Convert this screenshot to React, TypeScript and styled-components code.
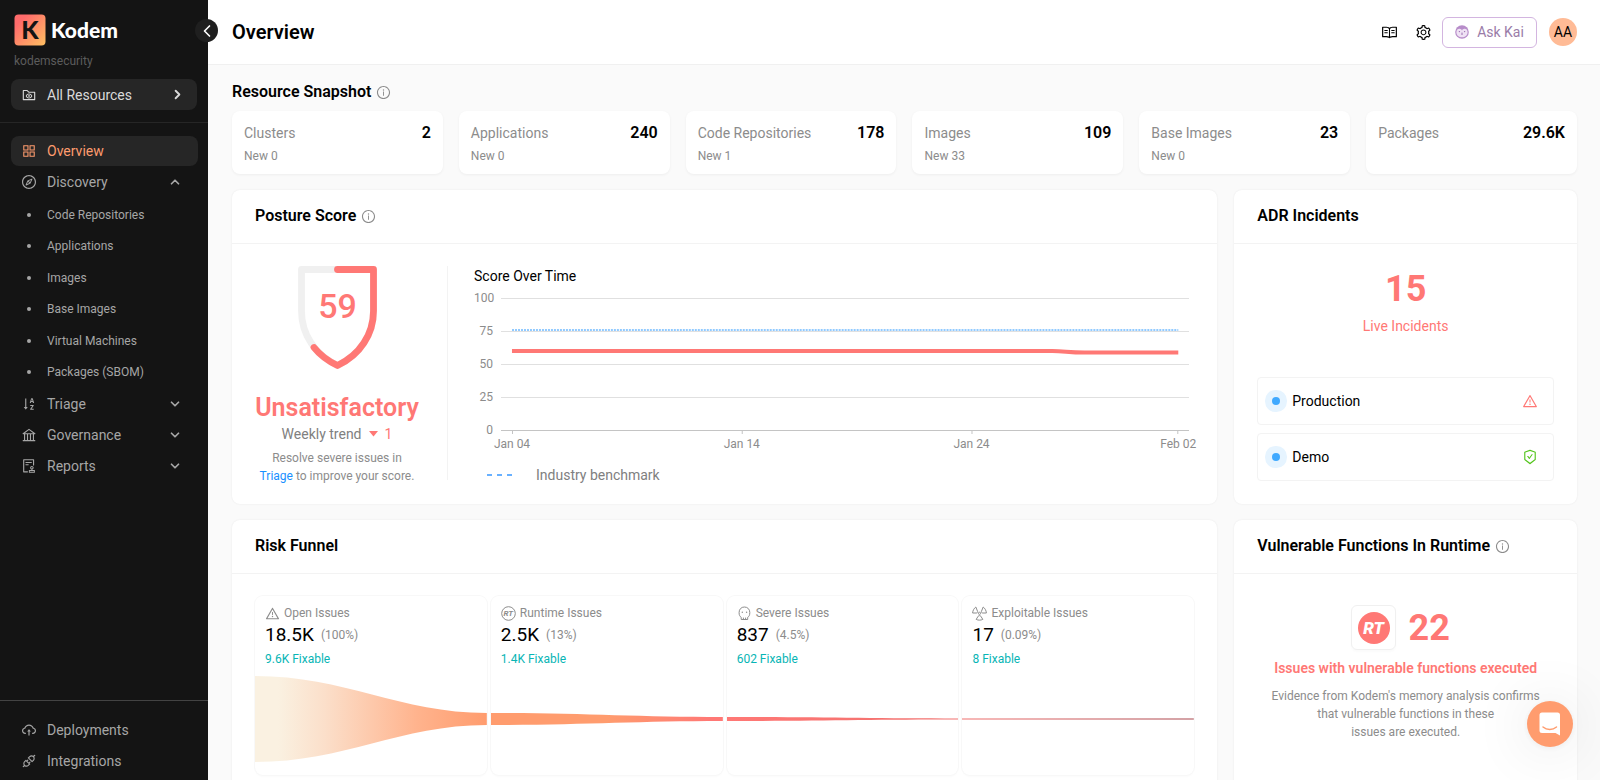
import React from 'react';
import styled, { createGlobalStyle } from 'styled-components';
import {
  AiOutlineApi,
  AiOutlineAppstore,
  AiOutlineAudit,
  AiOutlineBank,
  AiOutlineCloudUpload,
  AiOutlineCompass,
  AiOutlineFolderView,
  AiOutlineInfoCircle,
  AiOutlineRead,
  AiOutlineSafetyCertificate,
  AiOutlineSetting,
  AiOutlineSortAscending,
  AiOutlineWarning,
} from 'react-icons/ai';
import { ChevronDown, ChevronLeft, ChevronRight, ChevronUp } from 'lucide-react';

const coral = '#ff7875';
const orange = '#ff9c6e';
const muted = '#8c8c8c';
const line = '#f3f3f3';

const GlobalStyle = createGlobalStyle`
  *, *::before, *::after { box-sizing: border-box; }
  body {
    margin: 0;
    font-family: Roboto, "Liberation Sans", sans-serif;
    font-size: 14px;
    color: #000;
    background: #fafafa;
  }
  button { font: inherit; color: inherit; border: 0; background: none; padding: 0; cursor: pointer; }
  a { color: inherit; text-decoration: none; }
  h1, h2, h3, p, ul { margin: 0; padding: 0; }
  ul { list-style: none; }
  svg { display: block; flex: none; }
`;

const Page = styled.div`
  display: flex;
  height: 100vh;
`;

/* Sidebar */
const Sidebar = styled.aside`
  position: relative;
  z-index: 1;
  flex: none;
  width: 208px;
  display: flex;
  flex-direction: column;
  background: #141414;
  color: #a6a6a6;
`;

const Brand = styled.a`
  display: flex;
  align-items: center;
  gap: 5px;
  padding: 14px 14px 0;
`;

const BrandName = styled.span`
  font: 900 21px/32px Lato, sans-serif;
  color: #fff;
`;

const Tenant = styled.p`
  padding: 6px 14px 0;
  font-size: 12px;
  line-height: 18px;
  color: #5c5c5c;
`;

const CollapseButton = styled.button`
  position: absolute;
  top: 19px;
  right: -10px;
  width: 23px;
  height: 23px;
  display: grid;
  place-items: center;
  border-radius: 50%;
  background: #1f1f1f;
  color: #fff;
`;

const Scope = styled.div`
  padding: 9px 11px 12px;
  border-bottom: 1px solid #262626;
`;

const ScopeButton = styled.button`
  display: flex;
  align-items: center;
  gap: 10px;
  width: 100%;
  height: 31px;
  padding: 0 12px 0 10px;
  border-radius: 8px;
  background: #262626;
  color: #d9d9d9;
`;

const Grow = styled.span`
  flex: 1;
  text-align: left;
`;

const Nav = styled.nav`
  flex: 1;
  display: flex;
  flex-direction: column;
  padding: 13px 10px 0 11px;
`;

const NavLink = styled.a<{ $active?: boolean }>`
  display: flex;
  align-items: center;
  gap: 10px;
  height: 30px;
  padding: 0 10px;
  border-radius: 8px;
  background: ${(p) => (p.$active ? '#262626' : 'transparent')};
  color: ${(p) => (p.$active ? orange : 'inherit')};
`;

const NavGroup = styled(NavLink).attrs({ as: 'button' })`
  width: 100%;
  height: 31px;
  padding-right: 16px;
`;

const SubNav = styled.ul`
  display: grid;
  grid-auto-rows: 1fr;
  height: 189px;
  margin-top: 2px;
`;

const SubLink = styled.a`
  display: flex;
  align-items: center;
  gap: 16px;
  height: 100%;
  padding-left: 16px;
  font-size: 12px;

  &::before {
    content: '';
    width: 4px;
    height: 4px;
    border-radius: 50%;
    background: #a6a6a6;
  }
`;

const SideFooter = styled.div`
  padding: 13px 10px 4px 11px;
  border-top: 1px solid #434343;
  ${NavLink} { height: 31px; }
`;

/* Main column */
const Main = styled.main`
  flex: 1;
  min-width: 0;
  display: flex;
  flex-direction: column;
`;

const TopBar = styled.header`
  flex: none;
  display: flex;
  align-items: center;
  justify-content: space-between;
  height: 65px;
  padding: 0 23px 0 24px;
  background: #fff;
  border-bottom: 1px solid #f0f0f0;
`;

const PageTitle = styled.h1`
  font-size: 20px;
  line-height: 28px;
  font-weight: 600;
`;

const Tools = styled.div`
  display: flex;
  align-items: center;
`;

const IconButton = styled.button`
  width: 34px;
  height: 30px;
  display: grid;
  place-items: center;
`;

const AskButton = styled.button`
  display: flex;
  align-items: center;
  justify-content: center;
  gap: 8px;
  width: 95px;
  height: 31px;
  margin: 0 12px 0 2px;
  border: 1px solid #d3b5e0;
  border-radius: 6px;
  color: #9a7ca8;
`;

const Avatar = styled.button`
  width: 28px;
  height: 28px;
  border-radius: 50%;
  background: #ffbb96;
  font-size: 14px;
`;

const Content = styled.div`
  flex: 1;
  min-height: 0;
  overflow-y: auto;
  scrollbar-width: none;
  padding: 15px 23px 24px 24px;
`;

const Heading = styled.h2`
  display: flex;
  align-items: center;
  gap: 5px;
  font-size: 16px;
  line-height: 24px;
  font-weight: 600;
  svg { color: ${muted}; }
`;

const Snapshot = styled.section`
  display: grid;
  grid-template-columns: repeat(6, minmax(0, 1fr));
  gap: 16px;
  margin: 7px 0 16px;
`;

const Stat = styled.article`
  display: grid;
  gap: 3px;
  align-content: start;
  height: 63px;
  padding: 11px 12px 9px;
  border-radius: 8px;
  background: #fff;
  box-shadow: 0 1px 3px rgba(0, 0, 0, 0.05);
  color: ${muted};
`;

const StatTop = styled.div`
  display: flex;
  justify-content: space-between;
  line-height: 22px;
`;

const StatValue = styled.strong`
  font-size: 16px;
  font-weight: 600;
  color: #000;
`;

const Small = styled.span`
  font-size: 12px;
  line-height: 18px;
  color: ${muted};
`;

const Panels = styled.div`
  display: grid;
  grid-template-columns: minmax(0, 23fr) minmax(0, 8fr);
  gap: 16px 17px;
`;

const PanelBox = styled.section`
  display: flex;
  flex-direction: column;
  border-radius: 8px;
  background: #fff;
  box-shadow: 0 0 2px rgba(0, 0, 0, 0.08);
`;

const PanelHead = styled.header`
  padding: 14px 23px 15px;
  border-bottom: 1px solid ${line};
`;

/* Posture score */
const PostureBody = styled.div`
  display: flex;
  padding: 22px 28px 18px 23px;
`;

const ScoreColumn = styled.div`
  display: flex;
  flex-direction: column;
  align-items: center;
  width: 164px;
  text-align: center;
`;

const ScoreLabel = styled.strong`
  margin-top: 23px;
  font-size: 25px;
  line-height: 32px;
  font-weight: 600;
  color: ${coral};
`;

const Trend = styled.p`
  display: flex;
  align-items: center;
  gap: 7px;
  margin-bottom: 5px;
  line-height: 20px;
  color: #808080;
`;

const TrendValue = styled.span`
  color: ${coral};
`;

const Hint = styled.p`
  font-size: 12px;
  line-height: 18px;
  color: ${muted};
  a { color: #1890ff; }
`;

const Separator = styled.div`
  width: 1px;
  margin: 0 26px 5px 28px;
  background: ${line};
`;

const ChartColumn = styled.div`
  flex: 1;
  min-width: 0;
  line-height: 20px;
`;

const ChartRow = styled.div`
  display: flex;
  align-items: flex-start;
  gap: 8px;
  margin-top: 4px;
  font-size: 12px;
  line-height: 16px;
  color: ${muted};
`;

const YAxis = styled.div`
  display: flex;
  flex-direction: column;
  justify-content: space-between;
  width: 19px;
  height: 148px;
  text-align: right;
`;

const Plot = styled.div`
  flex: 1;
  min-width: 0;
  svg { width: 100%; height: 146px; }
`;

const XAxis = styled.div`
  display: grid;
  grid-template-columns: 10fr 10fr 9fr 0;
  padding: 0 11px;
  white-space: nowrap;
`;

const XLabel = styled.span`
  display: flex;
  justify-content: center;
  width: 0;
`;

const Legend = styled.div`
  display: flex;
  align-items: center;
  gap: 24px;
  margin-top: 13px;
  padding-left: 13px;
  color: #808080;
`;

/* Risk funnel */
const FunnelBody = styled.div`
  display: grid;
  grid-template-columns: repeat(4, minmax(0, 1fr));
  gap: 4px;
  padding: 22px 23px;
`;

const Stage = styled.article`
  border-radius: 8px;
  padding: 8px 0 13px;
  box-shadow: 0 0 0 1px #f8f8f8, 0 2px 2px rgba(0, 0, 0, 0.02);
`;

const StageInfo = styled.div`
  padding: 0 10px;
`;

const StageLabel = styled.h3`
  display: flex;
  align-items: center;
  gap: 4px;
  font-size: 12px;
  line-height: 18px;
  font-weight: 400;
  color: ${muted};
`;

const StageValue = styled.p`
  display: flex;
  align-items: center;
  gap: 7px;
  padding-top: 1px;
  font-size: 19px;
  line-height: 24px;
`;

const Fixable = styled.a`
  display: block;
  padding: 3px 0 8px;
  font-size: 12px;
  line-height: 18px;
  && { color: #08b5b5; }
`;

const Wave = styled.svg`
  width: 100%;
  height: 86px;
`;

/* Right column */
const IncidentBody = styled.div`
  padding: 23px;
  text-align: center;
`;

const BigNumber = styled.strong`
  display: block;
  font-size: 36px;
  line-height: 44px;
  font-weight: 700;
  color: ${coral};
`;

const LiveLabel = styled.p`
  margin: 4px 0 40px;
  line-height: 22px;
  color: ${coral};
`;

const EnvList = styled.ul`
  display: grid;
  gap: 8px;
`;

const EnvRow = styled.li`
  display: flex;
  align-items: center;
  gap: 5px;
  height: 48px;
  padding: 0 15px 0 7px;
  border: 1px solid ${line};
  border-radius: 4px;
`;

const Dot = styled.span`
  width: 8px;
  height: 8px;
  margin: 7px;
  border-radius: 50%;
  background: #40a9ff;
  box-shadow: 0 0 0 7px #e6f4ff;
`;

const RuntimeBody = styled.div`
  padding: 31px 32px;
  text-align: center;
`;

const RuntimeScore = styled.div`
  display: flex;
  justify-content: center;
  align-items: center;
  gap: 12px;
  padding-right: 10px;
`;

const RuntimeBadge = styled.span`
  display: grid;
  place-items: center;
  width: 45px;
  height: 45px;
  border: 1px solid #f0f0f0;
  border-radius: 6px;
  box-shadow: 0 2px 2px rgba(0, 0, 0, 0.02);
`;

const RuntimeTitle = styled.p`
  display: flex;
  justify-content: center;
  margin: 7px 0 8px;
  line-height: 22px;
  font-weight: 600;
  white-space: nowrap;
  color: ${coral};
`;

const ChatButton = styled.button`
  position: fixed;
  right: 27px;
  bottom: 33px;
  width: 46px;
  height: 46px;
  display: grid;
  place-items: center;
  border-radius: 50%;
  background: ${orange};
  box-shadow: 0 1px 6px rgba(0, 0, 0, 0.06), 0 2px 60px rgba(0, 0, 0, 0.12);
`;

const BrandMark = () => (
  <svg width="32" height="32" viewBox="0 0 32 32" aria-hidden="true">
    <defs>
      <linearGradient id="brand" x1="0" y1="0" x2="1" y2="1">
        <stop offset="0.2" stopColor="#ff6b6b" />
        <stop offset="1" stopColor="#ffc062" />
      </linearGradient>
    </defs>
    <rect x="0.5" y="0.5" width="31" height="31" rx="4" fill="url(#brand)" />
    <text x="16" y="25" textAnchor="middle" fontFamily="Lato, sans-serif" fontWeight="900" fontSize="25" fill="#141414">K</text>
  </svg>
);

const KaiIcon = () => (
  <svg width="14" height="14" viewBox="0 0 14 14" aria-hidden="true">
    <circle cx="7" cy="7" r="6.8" fill="#b78cc9" />
    <path d="M1.4 7.2C1.4 4.6 3 3.6 4.6 3.7 5.8 3.8 6.5 4.6 7 5.4 7.5 4.6 8.2 3.8 9.4 3.7 11 3.6 12.6 4.6 12.6 7.2 12.6 10.2 10 12.2 7 12.2S1.4 10.2 1.4 7.2Z" fill="#efe2f4" />
    <circle cx="4.4" cy="6.6" r="0.7" fill="#9a6cb0" />
    <circle cx="9.6" cy="6.6" r="0.7" fill="#9a6cb0" />
    <path d="M7 8v1.6" stroke="#9a6cb0" strokeWidth="1" strokeLinecap="round" />
  </svg>
);

const ShieldScore = ({ score }: { score: number }) => {
  const outline = 'M39.5 3.5H75.5V45C75.5 68 62 89 39.5 99.5 17 89 3.5 68 3.5 45V3.5Z';
  return (
    <svg width="79" height="103" viewBox="0 0 79 103" role="img" aria-label={`Posture score ${score}`}>
      <g fill="none" strokeWidth="6.8" strokeLinejoin="round" strokeLinecap="round">
        <path d={outline} stroke="#f0f0f0" />
        <path d="M39.5 3.5H75.5V45C75.5 68 62 89 39.5 99.5 30 95 22 89 16 81.5" stroke={coral} />
      </g>
      <text x="39.5" y="52" textAnchor="middle" fontSize="34" fontWeight="500" fill={coral}>{score}</text>
    </svg>
  );
};

const RuntimeIcon = () => (
  <svg width="15" height="15" viewBox="0 0 15 15" aria-hidden="true">
    <circle cx="7.5" cy="7.5" r="6.8" fill="none" stroke="currentColor" />
    <text x="7.2" y="10.2" textAnchor="middle" fontSize="8" fontWeight="700" fontStyle="italic" fill="currentColor">RT</text>
  </svg>
);

const SkullIcon = () => (
  <svg width="15" height="15" viewBox="0 0 15 15" fill="none" stroke="currentColor" aria-hidden="true">
    <path d="M4.2 13.5V11.3C2.8 10.4 2.1 9.3 2.1 6.5 2.1 3.2 4.3 1 7.4 1S12.8 3.2 12.8 6.5C12.8 9.3 12.1 10.4 10.7 11.3V13.5ZM6.4 11.6V13.5M8.6 11.6V13.5" strokeLinejoin="round" />
    <circle cx="5.3" cy="6.3" r="0.7" fill="currentColor" stroke="none" />
    <circle cx="9.6" cy="6.3" r="0.7" fill="currentColor" stroke="none" />
  </svg>
);

const RadiationIcon = () => (
  <svg width="15" height="15" viewBox="0 0 15 15" fill="none" stroke="currentColor" strokeLinejoin="round" aria-hidden="true">
    <path d="M3.8 1C2 2.4 0.8 4.5 0.6 7H4.4C5.3 7 5.9 6 5.5 5.2ZM11.2 1C13 2.4 14.2 4.5 14.4 7H10.6C9.7 7 9.1 6 9.5 5.2ZM6.2 10.2 4.2 13.4C6.2 14.4 8.8 14.4 10.8 13.4L8.8 10.2C8.3 9.4 6.7 9.4 6.2 10.2Z" />
    <circle cx="7.5" cy="7.3" r="1.1" />
  </svg>
);

const Info = () => <AiOutlineInfoCircle size={15} aria-label="More information" />;

const stats = [
  ['Clusters', '2', 'New 0'],
  ['Applications', '240', 'New 0'],
  ['Code Repositories', '178', 'New 1'],
  ['Images', '109', 'New 33'],
  ['Base Images', '23', 'New 0'],
  ['Packages', '29.6K', ''],
];

const discovery = ['Code Repositories', 'Applications', 'Images', 'Base Images', 'Virtual Machines', 'Packages (SBOM)'];

const groups = [
  { label: 'Triage', icon: <AiOutlineSortAscending size={16} /> },
  { label: 'Governance', icon: <AiOutlineBank size={16} /> },
  { label: 'Reports', icon: <AiOutlineAudit size={16} /> },
];

/* Each stage narrows from half-height `from` to half-height `to` around the middle line. */
const stages = [
  { label: 'Open Issues', icon: <AiOutlineWarning size={15} />, value: '18.5K', share: '(100%)', fix: '9.6K Fixable', from: 43, to: 6,
    stops: [['0.1', '#faf1e1'], ['0.3', '#fbdfca'], ['0.7', '#ffb38d'], ['1', orange]] },
  { label: 'Runtime Issues', icon: <RuntimeIcon />, value: '2.5K', share: '(13%)', fix: '1.4K Fixable', from: 6, to: 2,
    stops: [['0.5', orange], ['0.95', coral]] },
  { label: 'Severe Issues', icon: <SkullIcon />, value: '837', share: '(4.5%)', fix: '602 Fixable', from: 2, to: 0.5,
    stops: [['0', coral], ['1', '#f0706e']] },
  { label: 'Exploitable Issues', icon: <RadiationIcon />, value: '17', share: '(0.09%)', fix: '8 Fixable', from: 0.6, to: 0.6,
    stops: [['0', '#f0706e'], ['1', '#a8454c']] },
];

const waveCurve = (from: number, to: number) =>
  `M0 ${43 - from}C90 ${43 - from} 145 ${43 - to} 232 ${43 - to}V${43 + to}C145 ${43 + to} 90 ${43 + from} 0 ${43 + from}Z`;

const Panel = ({ title, info, children }: { title: string; info?: boolean; children: React.ReactNode }) => (
  <PanelBox>
    <PanelHead>
      <Heading>{title}{info && <Info />}</Heading>
    </PanelHead>
    {children}
  </PanelBox>
);

const ScoreChart = () => (
  <ChartColumn>
    <p>Score Over Time</p>
    <ChartRow>
      <YAxis>{[100, 75, 50, 25, 0].map((v) => <span key={v}>{v}</span>)}</YAxis>
      <Plot>
        <svg viewBox="0 0 689 146" preserveAspectRatio="none" aria-hidden="true">
          <g stroke="#e0e0e0">
            {[8, 41, 74, 107].map((y) => <path key={y} d={`M0 ${y + 0.5}H689`} />)}
          </g>
          <path d="M0 140.5H689M11.5 140V144M241.5 140V144M471.5 140V144M677.5 140V144" stroke="#c4c4c4" />
          <path d="M11 40H678" stroke="#91caff" strokeWidth="2" strokeDasharray="2 1" />
          <path d="M11 61H552C564 61 568 62.5 584 62.5H678" fill="none" stroke={coral} strokeWidth="4" />
        </svg>
        <XAxis>{['Jan 04', 'Jan 14', 'Jan 24', 'Feb 02'].map((d) => <XLabel key={d}>{d}</XLabel>)}</XAxis>
      </Plot>
    </ChartRow>
    <Legend>
      <svg width="25" height="2" aria-hidden="true"><path d="M0 1H25" stroke="#69b1ff" strokeWidth="2" strokeDasharray="5 5" /></svg>
      Industry benchmark
    </Legend>
  </ChartColumn>
);

export default function App() {
  return (
    <Page>
      <GlobalStyle />
      <Sidebar>
        <Brand href="#home"><BrandMark /><BrandName>Kodem</BrandName></Brand>
        <Tenant>kodemsecurity</Tenant>
        <CollapseButton aria-label="Collapse sidebar"><ChevronLeft size={20} strokeWidth={2} /></CollapseButton>
        <Scope>
          <ScopeButton>
            <AiOutlineFolderView size={16} /><Grow>All Resources</Grow><ChevronRight size={15} strokeWidth={3} />
          </ScopeButton>
        </Scope>
        <Nav>
          <NavLink href="#overview" $active aria-current="page"><AiOutlineAppstore size={16} />Overview</NavLink>
          <NavGroup aria-expanded="true"><AiOutlineCompass size={16} /><Grow>Discovery</Grow><ChevronUp size={14} strokeWidth={3} /></NavGroup>
          <SubNav>
            {discovery.map((d) => <li key={d}><SubLink href="#discovery">{d}</SubLink></li>)}
          </SubNav>
          {groups.map((g) => (
            <NavGroup key={g.label} aria-expanded="false">{g.icon}<Grow>{g.label}</Grow><ChevronDown size={14} strokeWidth={3} /></NavGroup>
          ))}
        </Nav>
        <SideFooter>
          <NavLink href="#deployments"><AiOutlineCloudUpload size={16} />Deployments</NavLink>
          <NavLink href="#integrations"><AiOutlineApi size={16} />Integrations</NavLink>
        </SideFooter>
      </Sidebar>

      <Main>
        <TopBar>
          <PageTitle>Overview</PageTitle>
          <Tools>
            <IconButton aria-label="Documentation"><AiOutlineRead size={17} /></IconButton>
            <IconButton aria-label="Settings"><AiOutlineSetting size={17} /></IconButton>
            <AskButton><KaiIcon />Ask Kai</AskButton>
            <Avatar aria-label="Account">AA</Avatar>
          </Tools>
        </TopBar>

        <Content>
          <Heading>Resource Snapshot<Info /></Heading>
          <Snapshot>
            {stats.map(([label, value, fresh]) => (
              <Stat key={label}>
                <StatTop>{label}<StatValue>{value}</StatValue></StatTop>
                {fresh && <Small>{fresh}</Small>}
              </Stat>
            ))}
          </Snapshot>

          <Panels>
            <Panel title="Posture Score" info>
              <PostureBody>
                <ScoreColumn>
                  <ShieldScore score={59} />
                  <ScoreLabel>Unsatisfactory</ScoreLabel>
                  <Trend>
                    Weekly trend
                    <svg width="9" height="6" viewBox="0 0 9 6" aria-hidden="true"><path d="M0 0H9L4.5 5.5Z" fill={coral} /></svg>
                    <TrendValue>1</TrendValue>
                  </Trend>
                  <Hint>Resolve severe issues in <a href="#triage">Triage</a> to improve your score.</Hint>
                </ScoreColumn>
                <Separator />
                <ScoreChart />
              </PostureBody>
            </Panel>

            <Panel title="ADR Incidents">
              <IncidentBody>
                <BigNumber>15</BigNumber>
                <LiveLabel>Live Incidents</LiveLabel>
                <EnvList>
                  <EnvRow><Dot /><Grow>Production</Grow><AiOutlineWarning size={16} color="#ff7875" /></EnvRow>
                  <EnvRow><Dot /><Grow>Demo</Grow><AiOutlineSafetyCertificate size={16} color="#52c41a" /></EnvRow>
                </EnvList>
              </IncidentBody>
            </Panel>

            <Panel title="Risk Funnel">
              <FunnelBody>
                {stages.map((s, i) => (
                  <Stage key={s.label}>
                    <StageInfo>
                      <StageLabel>{s.icon}{s.label}</StageLabel>
                      <StageValue>{s.value}<Small>{s.share}</Small></StageValue>
                      <Fixable href="#fixable">{s.fix}</Fixable>
                    </StageInfo>
                    <Wave viewBox="0 0 232 86" preserveAspectRatio="none" aria-hidden="true">
                      <defs>
                        <linearGradient id={`stage${i}`}>
                          {s.stops.map(([offset, color]) => <stop key={offset} offset={offset} stopColor={color} />)}
                        </linearGradient>
                      </defs>
                      <path d={waveCurve(s.from, s.to)} fill={`url(#stage${i})`} />
                    </Wave>
                  </Stage>
                ))}
              </FunnelBody>
            </Panel>

            <Panel title="Vulnerable Functions In Runtime" info>
              <RuntimeBody>
                <RuntimeScore>
                  <RuntimeBadge>
                    <svg width="32" height="32" viewBox="0 0 32 32" aria-hidden="true">
                      <circle cx="16" cy="16" r="16" fill={coral} />
                      <text x="15.5" y="22" textAnchor="middle" fontSize="17" fontWeight="900" fontStyle="italic" fill="#fff">RT</text>
                    </svg>
                  </RuntimeBadge>
                  <BigNumber>22</BigNumber>
                </RuntimeScore>
                <RuntimeTitle>Issues with vulnerable functions executed</RuntimeTitle>
                <Hint>Evidence from Kodem's memory analysis confirms that vulnerable functions in these<br />issues are executed.</Hint>
              </RuntimeBody>
            </Panel>
          </Panels>
        </Content>
      </Main>

      <ChatButton aria-label="Open chat">
        <svg width="22" height="24" viewBox="0 0 22 24" aria-hidden="true">
          <path d="M3 0.5H18.5A2.5 2.5 0 0 1 21 3V23.5L16.5 21H3A2.5 2.5 0 0 1 0.5 18.5V3A2.5 2.5 0 0 1 3 0.5Z" fill="#fff" />
          <path d="M4 15C8 18.3 13.5 18.3 17.5 15" fill="none" stroke={orange} strokeWidth="1.5" strokeLinecap="round" />
        </svg>
      </ChatButton>
    </Page>
  );
}
